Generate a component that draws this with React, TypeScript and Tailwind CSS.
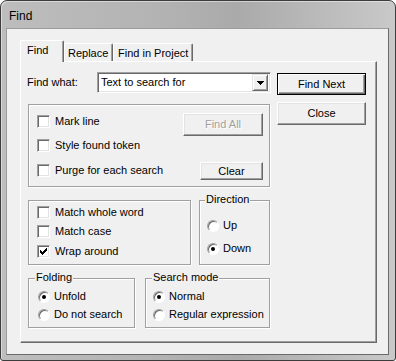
import React from "react";

function Check({ checked }: { checked?: boolean }) {
  return (
    <span className="w-[13px] h-[13px] shrink-0 bg-white border border-t-[#a0a0a0] border-l-[#a0a0a0] border-r-white border-b-white shadow-[inset_1px_1px_0_#696969,inset_-1px_-1px_0_#e3e3e3] flex items-center justify-center">
      {checked && (
        <svg width="7" height="7" viewBox="0 0 7 7" shapeRendering="crispEdges">
          <path
            d="M6 0h1v1h-1z M5 1h2v1h-2z M0 2h1v1h-1z M4 2h3v1h-3z M0 3h2v1h-2z M3 3h3v1h-3z M0 4h5v1h-5z M1 5h3v1h-3z M2 6h1v1h-1z"
            fill="#000"
          />
        </svg>
      )}
    </span>
  );
}

function Radio({ on }: { on?: boolean }) {
  return (
    <span className="w-[12px] h-[12px] shrink-0 rounded-full bg-white border border-t-[#a0a0a0] border-l-[#a0a0a0] border-r-white border-b-white shadow-[inset_1px_1px_0_#696969] flex items-center justify-center">
      {on && <span className="w-[4px] h-[4px] rounded-full bg-black" />}
    </span>
  );
}

function CheckRow({ label, checked }: { label: string; checked?: boolean }) {
  return (
    <div className="flex items-center gap-[5px] h-[13px]">
      <Check checked={checked} />
      <span className="leading-[13px]">{label}</span>
    </div>
  );
}

function RadioRow({ label, on }: { label: string; on?: boolean }) {
  return (
    <div className="flex items-center gap-[4px] h-[13px]">
      <Radio on={on} />
      <span className="leading-[13px]">{label}</span>
    </div>
  );
}

export default function App() {
  return (
    <div className="w-[396px] h-[361px] font-['Liberation_Sans',Arial,sans-serif] text-[11px] text-black">
      <div className="w-[396px] h-[361px] border border-[#3c3c3c] rounded-t-[7px] rounded-b-[3px] bg-[linear-gradient(90deg,#bdbdbd_0%,#b3b3b3_40%,#aaaaaa_60%,#c9c9c9_100%)] shadow-[inset_1px_1px_0_rgba(255,255,255,0.45)] flex flex-col">
        <div className="h-[27px] pl-[8px] pt-[2px] flex items-center text-[12px] text-black">Find</div>
        <div className="ml-[5px] w-[383px] h-[327px] bg-[#f0f0f0] border border-t-[#9c9c9c] border-l-[#9c9c9c] border-r-[#6a6a6a] border-b-[#6a6a6a] pl-[13px] pt-[11px] flex flex-col">
          {/* tabs */}
          <div className="flex items-end">
            <div className="relative z-10 h-[22px] w-[44px] bg-[#f0f0f0] border-l border-t border-r border-l-white border-t-white border-r-[#696969] rounded-t-[2px] shadow-[inset_-1px_0_0_#a0a0a0] pl-[6px] pb-[3px] flex items-center">
              Find
            </div>
            <div className="h-[19px] w-[49px] border-l border-t border-r border-l-white border-t-white border-r-[#696969] rounded-t-[2px] shadow-[inset_-1px_0_0_#a0a0a0] pl-[3px] pt-[1px] flex items-center">
              Replace
            </div>
            <div className="h-[19px] w-[80px] border-l border-t border-r border-l-white border-t-white border-r-[#696969] rounded-t-[2px] shadow-[inset_-1px_0_0_#a0a0a0] pl-[4px] pt-[1px] flex items-center">
              Find in Project
            </div>
          </div>
          {/* panel */}
          <div className="-mt-[1px] w-[357px] h-[282px] border border-t-white border-l-white border-r-[#696969] border-b-[#696969] shadow-[inset_-1px_-1px_0_#a0a0a0] pl-[6px] pt-[10px] flex gap-[6px]">
            <div className="w-[244px] flex flex-col">
              <div className="flex items-center h-[21px]">
                <span className="w-[70px]">Find what:</span>
                <div className="w-[174px] h-[21px] bg-white border border-t-[#a0a0a0] border-l-[#a0a0a0] border-r-white border-b-white shadow-[inset_1px_1px_0_#696969,inset_-1px_-1px_0_#e3e3e3] flex items-center pl-[3px] pr-[2px]">
                  <span className="flex-1">Text to search for</span>
                  <span className="w-[16px] h-[17px] bg-[#f0f0f0] border border-t-[#e3e3e3] border-l-[#e3e3e3] border-r-[#696969] border-b-[#696969] shadow-[inset_1px_1px_0_#fff,inset_-1px_-1px_0_#a0a0a0] flex items-center justify-center">
                    <svg width="7" height="4" viewBox="0 0 7 4" shapeRendering="crispEdges">
                      <path d="M0 0h7v1h-7z M1 1h5v1h-5z M2 2h3v1h-3z M3 3h1v1h-1z" fill="#000" />
                    </svg>
                  </span>
                </div>
              </div>

              {/* group 1 */}
              <div className="mt-[11px] ml-[1px] w-[242px] h-[83px] border border-[#a0a0a0] shadow-[1px_1px_0_#fff,inset_1px_1px_0_#fff] flex justify-between">
                <div className="pl-[8px] pt-[10px] flex flex-col">
                  <CheckRow label="Mark line" />
                  <div className="mt-[11px]">
                    <CheckRow label="Style found token" />
                  </div>
                  <div className="mt-[12px]">
                    <CheckRow label="Purge for each search" />
                  </div>
                </div>
                <div className="pr-[6px] pt-[8px] flex flex-col items-end">
                  <div className="w-[80px] h-[23px] bg-[#f0f0f0] border border-t-white border-l-white border-r-[#696969] border-b-[#696969] shadow-[inset_-1px_-1px_0_#a0a0a0,inset_1px_1px_0_#e3e3e3] flex items-center justify-center text-[#a0a0a0] [text-shadow:1px_1px_0_#fff]">
                    Find All
                  </div>
                  <div className="mt-[26px] w-[63px] h-[18px] bg-[#f0f0f0] border border-t-white border-l-white border-r-[#696969] border-b-[#696969] shadow-[inset_-1px_-1px_0_#a0a0a0,inset_1px_1px_0_#e3e3e3] flex items-center justify-center">
                    Clear
                  </div>
                </div>
              </div>

              {/* group 2 row */}
              <div className="mt-[13px] flex">
                <div className="ml-[1px] w-[163px] h-[65px] border border-[#a0a0a0] shadow-[1px_1px_0_#fff,inset_1px_1px_0_#fff] pl-[8px] pt-[5px] flex flex-col gap-[6px]">
                  <CheckRow label="Match whole word" />
                  <CheckRow label="Match case" />
                  <div className="mt-[1px]">
                    <CheckRow label="Wrap around" checked />
                  </div>
                </div>
                <div className="relative ml-[8px] w-[71px] h-[65px] border border-[#a0a0a0] shadow-[1px_1px_0_#fff,inset_1px_1px_0_#fff] pl-[7px] pt-[18px] flex flex-col gap-[10px]">
                  <span className="absolute -top-[8px] left-[5px] px-[1px] bg-[#f0f0f0] leading-[13px]">Direction</span>
                  <RadioRow label="Up" />
                  <RadioRow label="Down" on />
                </div>
              </div>

              {/* group 3 row */}
              <div className="mt-[13px] flex">
                <div className="relative ml-[1px] w-[107px] h-[50px] border border-[#a0a0a0] shadow-[1px_1px_0_#fff,inset_1px_1px_0_#fff] pl-[9px] pt-[11px] flex flex-col gap-[5px]">
                  <span className="absolute -top-[8px] left-[6px] px-[1px] bg-[#f0f0f0] leading-[13px]">Folding</span>
                  <RadioRow label="Unfold" on />
                  <RadioRow label="Do not search" />
                </div>
                <div className="relative ml-[10px] w-[125px] h-[50px] border border-[#a0a0a0] shadow-[1px_1px_0_#fff,inset_1px_1px_0_#fff] pl-[7px] pt-[11px] flex flex-col gap-[5px]">
                  <span className="absolute -top-[8px] left-[6px] px-[1px] bg-[#f0f0f0] leading-[13px]">Search mode</span>
                  <RadioRow label="Normal" on />
                  <RadioRow label="Regular expression" />
                </div>
              </div>
            </div>

            {/* right buttons */}
            <div className="flex flex-col pt-[1px]">
              <div className="w-[89px] h-[22px] border border-black">
                <div className="w-full h-full bg-[#f0f0f0] shadow-[inset_1px_1px_0_#fff,inset_-1px_-1px_0_#696969,inset_-2px_-2px_0_#a0a0a0] flex items-center justify-center">
                  Find Next
                </div>
              </div>
              <div className="mt-[7px] w-[89px] h-[23px] bg-[#f0f0f0] border border-t-white border-l-white border-r-[#696969] border-b-[#696969] shadow-[inset_-1px_-1px_0_#a0a0a0,inset_1px_1px_0_#e3e3e3] flex items-center justify-center">
                Close
              </div>
            </div>
          </div>
        </div>
      </div>
    </div>
  );
}
